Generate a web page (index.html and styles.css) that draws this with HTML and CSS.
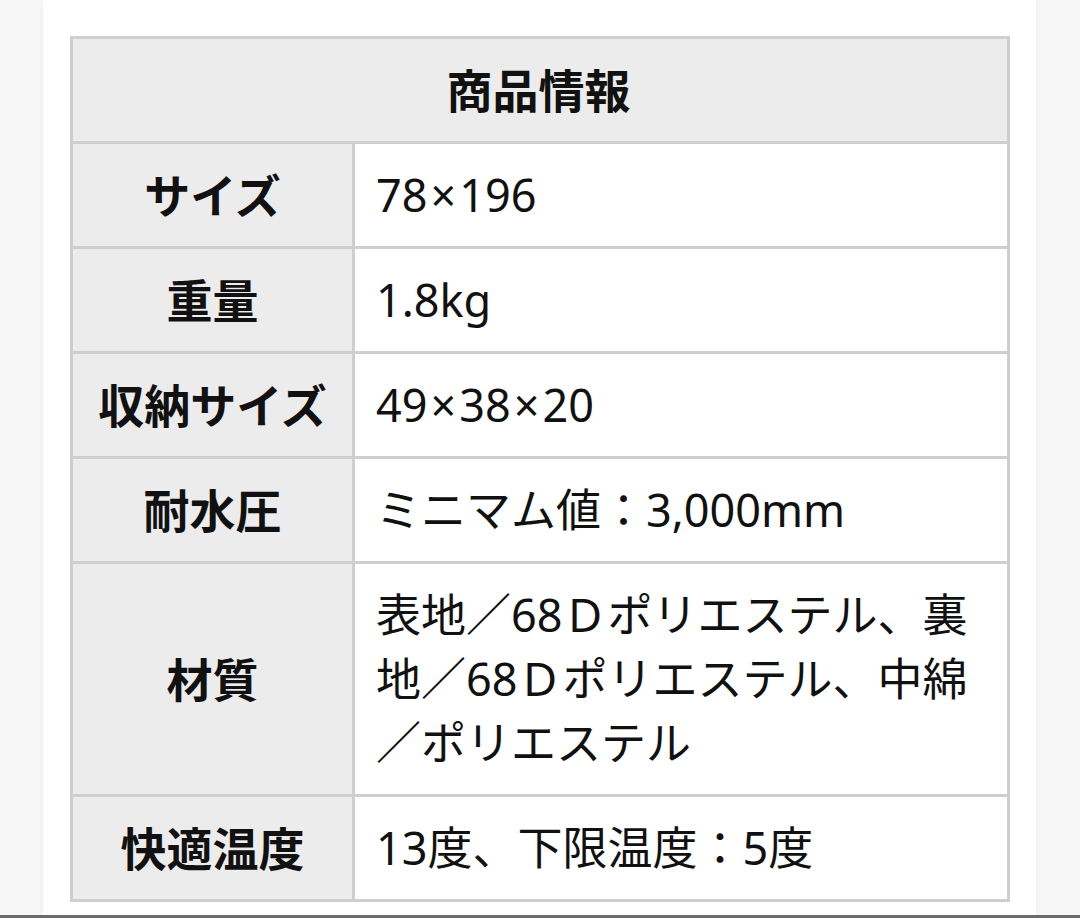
FILE: index.html
```html
<!DOCTYPE html>
<html lang="ja">
<head>
<meta charset="utf-8">
<title>商品情報</title>
<link rel="stylesheet" href="styles.css">
</head>
<body>
<div class="page">
  <div class="card">
    <table class="spec">
      <colgroup><col class="c-label"><col class="c-value"></colgroup>
      <thead>
        <tr><th colspan="2" class="head">商品情報</th></tr>
      </thead>
      <tbody>
        <tr><th class="label">サイズ</th><td class="value">78<span class="times">×</span>196</td></tr>
        <tr><th class="label">重量</th><td class="value">1.8kg</td></tr>
        <tr><th class="label">収納サイズ</th><td class="value">49<span class="times">×</span>38<span class="times">×</span>20</td></tr>
        <tr><th class="label">耐水圧</th><td class="value">ミニマム値：3,000mm</td></tr>
        <tr><th class="label">材質</th><td class="value">表地／68Ｄポリエステル、裏地／68Ｄポリエステル、中綿／ポリエステル</td></tr>
        <tr><th class="label">快適温度</th><td class="value">13度、下限温度：5度</td></tr>
      </tbody>
    </table>
  </div>
</div>
<div class="bottom-line"></div>
</body>
</html>
```

FILE: styles.css
```css
html, body {
  margin: 0;
  padding: 0;
}

body {
  background: #f6f6f6;
  font-family: "Noto Sans", "Noto Sans CJK JP", sans-serif;
  color: #111111;
  height: 918px;
  overflow: hidden;
  display: flex;
  flex-direction: column;
}

.page {
  flex: 1;
  padding: 0 44px 0 43px;
  display: flex;
}

.card {
  flex: 1;
  background: #ffffff;
  padding: 36px 25px 0 27px;
  box-shadow: 0 0 6px rgba(0, 0, 0, 0.04);
}

.bottom-line {
  height: 3px;
  background: #6a6a6a;
}

.spec {
  width: 940px;
  table-layout: fixed;
  border-collapse: separate;
  border-spacing: 0;
  border-top: 3px solid #cfcfcf;
  border-left: 3px solid #cfcfcf;
  font-size: 45px;
  line-height: 64px;
}

.c-label {
  width: 282px;
}

.spec th,
.spec td {
  border-right: 3px solid #cfcfcf;
  border-bottom: 3px solid #cfcfcf;
  padding: 19px 24px 19px 21px;
  vertical-align: middle;
}

.spec .head {
  background: #ececec;
  font-size: 46px;
  font-weight: 700;
  text-align: center;
}

.spec .label {
  background: #ececec;
  font-size: 46px;
  font-weight: 700;
  text-align: center;
  padding-left: 6px;
  padding-right: 6px;
  white-space: nowrap;
}

.spec .value {
  background: #ffffff;
  font-weight: 400;
  text-align: left;
}

.times {
  margin: 0 3px;
}
```
